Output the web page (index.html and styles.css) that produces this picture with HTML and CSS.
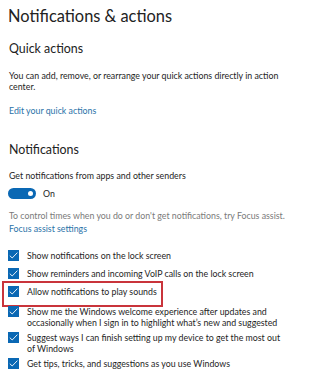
FILE: index.html
```html
<!DOCTYPE html>
<html>
<head>
<meta charset="utf-8">
<link rel="stylesheet" href="styles.css">
</head>
<body>
<div class="page">
  <h1 class="title">Notifications &amp; actions</h1>
  <h2 class="section">Quick actions</h2>
  <p class="text qa-text">You can add, remove, or rearrange your quick actions directly in action center.</p>
  <a class="link edit-link">Edit your quick actions</a>

  <h2 class="section notif-head">Notifications</h2>
  <p class="text get-text">Get notifications from apps and other senders</p>
  <div class="toggle-row">
    <span class="toggle"><span class="knob"></span></span>
    <span class="text">On</span>
  </div>
  <p class="text gray focus-text">To control times when you do or don't get notifications, try Focus assist.</p>
  <a class="link focus-link">Focus assist settings</a>

  <ul class="checks">
    <li class="check"><span class="box"><svg viewBox="0 0 11 11"><path d="M1.8 5.7 L4.2 8 L9.4 2.6" fill="none" stroke="#fff" stroke-width="0.9"/></svg></span><span class="label">Show notifications on the lock screen</span></li>
    <li class="check row-2"><span class="box"><svg viewBox="0 0 11 11"><path d="M1.8 5.7 L4.2 8 L9.4 2.6" fill="none" stroke="#fff" stroke-width="0.9"/></svg></span><span class="label">Show reminders and incoming VoIP calls on the lock screen</span></li>
    <li class="check row-3 highlight"><span class="box"><svg viewBox="0 0 11 11"><path d="M1.8 5.7 L4.2 8 L9.4 2.6" fill="none" stroke="#fff" stroke-width="0.9"/></svg></span><span class="label">Allow notifications to play sounds</span></li>
    <li class="check row-4"><span class="box"><svg viewBox="0 0 11 11"><path d="M1.8 5.7 L4.2 8 L9.4 2.6" fill="none" stroke="#fff" stroke-width="0.9"/></svg></span><span class="label">Show me the Windows welcome experience after updates and<br>occasionally when I sign in to highlight what’s new and suggested</span></li>
    <li class="check row-5"><span class="box"><svg viewBox="0 0 11 11"><path d="M1.8 5.7 L4.2 8 L9.4 2.6" fill="none" stroke="#fff" stroke-width="0.9"/></svg></span><span class="label">Suggest ways I can finish setting up my device to get the most out<br>of Windows</span></li>
    <li class="check row-6"><span class="box"><svg viewBox="0 0 11 11"><path d="M1.8 5.7 L4.2 8 L9.4 2.6" fill="none" stroke="#fff" stroke-width="0.9"/></svg></span><span class="label">Get tips, tricks, and suggestions as you use Windows</span></li>
  </ul>
</div>
</body>
</html>
```
FILE: styles.css
```css
* { box-sizing: border-box; }
html, body { margin: 0; padding: 0; background: #fff; }
body { font-family: "Lato", "Open Sans", sans-serif; color: #1e1e1e; }
.page { width: 320px; height: 384px; overflow: hidden; padding: 5px 0 0 8px; display: flex; flex-direction: column; align-items: flex-start; }
.title { margin: 0; font-size: 16.4px; font-weight: 400; line-height: 22px; color: #222; }
.section { margin: 12.5px 0 0 1px; font-size: 12.4px; font-weight: 400; line-height: 17px; color: #222; }
.text { margin: 0; font-size: 8.8px; line-height: 11px; }
.qa-text { margin: 13.5px 0 0 1px; width: 272px; }
.link { display: block; font-size: 8.8px; line-height: 11px; color: #2a72a8; margin-left: 1px; }
.edit-link { margin-top: 13px; }
.notif-head { margin-top: 25px; }
.get-text { margin: 11.5px 0 0 1px; }
.toggle-row { display: flex; align-items: center; gap: 7px; margin: 7px 0 0 0; }
.toggle { width: 28px; height: 11px; border-radius: 6px; background: #0a68b4; position: relative; display: block; }
.knob { position: absolute; right: 3.5px; top: 3px; width: 5px; height: 5px; border-radius: 50%; background: #fff; }
.gray { color: #7a7a7a; }
.focus-text { margin: 11.5px 0 0 1px; }
.focus-link { margin-top: 1.5px; }
.checks { list-style: none; margin: 16px 0 0 0; padding: 0; display: flex; flex-direction: column; }
.check { display: flex; align-items: flex-start; gap: 8px; font-size: 8.8px; line-height: 11px; position: relative; }
.row-2 { margin-top: 7px; }
.row-3 { margin-top: 7.5px; }
.row-4 { margin-top: 9px; }
.row-5 { margin-top: 4px; }
.row-6 { margin-top: 4px; }
.box { flex: none; width: 11px; height: 11px; background: #0a68b4; display: block; }
.box svg { display: block; width: 11px; height: 11px; }
.label { width: 275px; }
.highlight::before { content: ""; position: absolute; left: -6px; top: -5px; width: 157px; height: 22px; border: 2px solid #c9343b; }
```
